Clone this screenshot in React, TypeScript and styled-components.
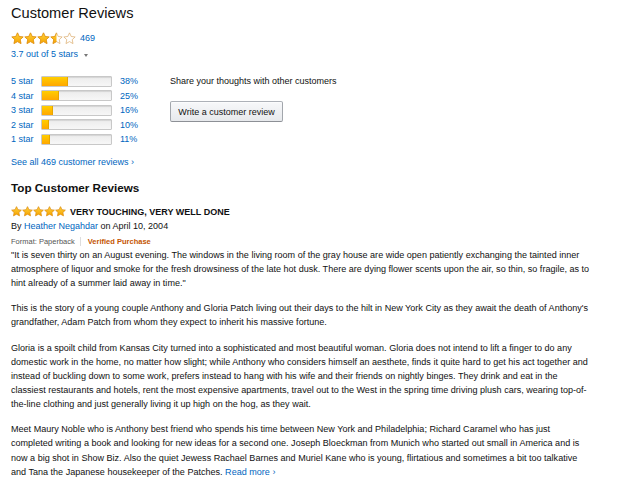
import styled, { createGlobalStyle } from 'styled-components'

const GlobalStyle = createGlobalStyle`
  html, body {
    margin: 0;
    padding: 0;
    background: #fff;
  }
  body {
    font-family: "Liberation Sans", Arial, sans-serif;
    color: #111;
  }
`

const Page = styled.div`
  padding: 2px 4px 0 11px;
  width: 626px;
  box-sizing: border-box;
  height: 478px;
  overflow: hidden;
`

const Heading = styled.h2`
  font-size: 14.6px;
  font-weight: 400;
  line-height: 22px;
  margin: 0 0 7px;
  color: #111;
`

const Link = styled.a`
  color: #0066c0;
  text-decoration: none;
  cursor: pointer;
`

const StarsRow = styled.div`
  display: flex;
  align-items: center;
  gap: 4px;
  height: 14px;
  font-size: 9px;
`

const StarStrip = styled.span<{ $size: number }>`
  display: inline-flex;
  svg {
    width: ${(p) => p.$size}px;
    height: ${(p) => p.$size}px;
    display: block;
  }
`

const Average = styled.div`
  font-size: 9px;
  line-height: 11px;
  margin: 4px 0 14px;
  display: flex;
  align-items: center;
  gap: 6px;
`

const Caret = styled.span`
  display: inline-block;
  width: 0;
  height: 0;
  border-left: 2.5px solid transparent;
  border-right: 2.5px solid transparent;
  border-top: 3px solid #777;
  margin-top: 1px;
`

const Summary = styled.div`
  display: flex;
`

const Histogram = styled.div`
  width: 159px;
  display: flex;
  flex-direction: column;
`

const HistRow = styled.div`
  display: flex;
  align-items: center;
  height: 14.5px;
  font-size: 9px;
`

const HistLabel = styled(Link)`
  width: 30px;
`

const Bar = styled.div`
  width: 71px;
  height: 11px;
  box-sizing: border-box;
  background: linear-gradient(#ececec, #f7f7f7);
  border: 1px solid #c8c8c8;
  border-radius: 1px;
  box-shadow: inset 0 1px 1px rgba(0, 0, 0, 0.1);
  overflow: hidden;
`

const BarFill = styled.div`
  height: 100%;
  background: linear-gradient(#ffce00, #ffa700);
  border-right: 1px solid #e6a500;
  box-sizing: border-box;
`

const Percent = styled(Link)`
  margin-left: 8px;
`

const SeeAll = styled(Link)`
  font-size: 9px;
  line-height: 11px;
  margin: 10px 0 0;
  display: block;
`

const ShareBox = styled.div`
  padding-top: 2px;
  display: flex;
  flex-direction: column;
  align-items: flex-start;
  gap: 14px;
  font-size: 9px;
  line-height: 11px;
  color: #111;
`

const ReviewButton = styled.button`
  font-family: "Liberation Sans", Arial, sans-serif;
  font-size: 9px;
  color: #111;
  width: 113px;
  height: 21px;
  padding: 0;
  border: 1px solid;
  border-color: #adb1b8 #a2a6ac #8d9096;
  border-radius: 2px;
  background: linear-gradient(#f7f8fa, #e7e9ec);
  box-shadow: 0 1px 0 rgba(255, 255, 255, 0.6) inset;
`

const SubHeading = styled.h3`
  font-size: 11.7px;
  font-weight: 700;
  margin: 12px 0 9px;
  line-height: 16px;
`

const ReviewTitleRow = styled.div`
  display: flex;
  align-items: center;
  gap: 4px;
  height: 14px;
`

const ReviewTitle = styled.span`
  font-size: 9px;
  font-weight: 700;
`

const Byline = styled.div`
  font-size: 9px;
  margin-top: 1.5px;
  line-height: 13px;
`

const Meta = styled.div`
  font-size: 7.5px;
  line-height: 11px;
  color: #555;
  margin-top: 3px;
  display: flex;
  align-items: center;
`

const Divider = styled.span`
  width: 1px;
  height: 9px;
  background: #ddd;
  margin: 0 7px 0 5px;
`

const Verified = styled.span`
  color: #c45500;
  font-weight: 700;
`

const Body = styled.div`
  font-size: 9.05px;
  line-height: 14.1px;
  color: #111;
  margin-top: 0.5px;
`

const Paragraph = styled.p`
  margin: 0 0 11.3px;
`

const Line = styled.span`
  display: block;
  white-space: nowrap;
`

const STAR_PATH = 'M10 1.3l2.6 5.6 6.1.7-4.5 4.2 1.2 6-5.4-3-5.4 3 1.2-6L1.3 7.6l6.1-.7z'

const Star = ({ fill }: { fill: 'full' | 'half' | 'empty' }) => (
  <svg viewBox="0 0 20 20">
    <defs>
      <linearGradient id="sg" x1="0" y1="0" x2="0" y2="1">
        <stop offset="0" stopColor="#ffd33d" />
        <stop offset="1" stopColor="#f5a200" />
      </linearGradient>
      <clipPath id="half">
        <rect x="0" y="0" width="10" height="20" />
      </clipPath>
    </defs>
    <path d={STAR_PATH} fill="#fff" stroke="#d9a45e" strokeWidth="1" strokeLinejoin="round" />
    {fill !== 'empty' && (
      <path
        d={STAR_PATH}
        fill="url(#sg)"
        stroke="#e08a00"
        strokeWidth="1"
        strokeLinejoin="round"
        clipPath={fill === 'half' ? 'url(#half)' : undefined}
      />
    )}
  </svg>
)

const Stars = ({ rating, size }: { rating: number; size: number }) => (
  <StarStrip $size={size}>
    {[1, 2, 3, 4, 5].map((i) => (
      <Star key={i} fill={rating >= i ? 'full' : rating >= i - 0.5 ? 'half' : 'empty'} />
    ))}
  </StarStrip>
)

const breakdown = [
  { label: '5 star', pct: 38 },
  { label: '4 star', pct: 25 },
  { label: '3 star', pct: 16 },
  { label: '2 star', pct: 10 },
  { label: '1 star', pct: 11 },
]

// review text, broken where the original page wraps it
const paragraphs = [
  [
    '"It is seven thirty on an August evening. The windows in the living room of the gray house are wide open patiently exchanging the tainted inner',
    'atmosphere of liquor and smoke for the fresh drowsiness of the late hot dusk. There are dying flower scents upon the air, so thin, so fragile, as to',
    'hint already of a summer laid away in time."',
  ],
  [
    "This is the story of a young couple Anthony and Gloria Patch living out their days to the hilt in New York City as they await the death of Anthony's",
    'grandfather, Adam Patch from whom they expect to inherit his massive fortune.',
  ],
  [
    'Gloria is a spoilt child from Kansas City turned into a sophisticated and most beautiful woman. Gloria does not intend to lift a finger to do any',
    'domestic work in the home, no matter how slight; while Anthony who considers himself an aesthete, finds it quite hard to get his act together and',
    'instead of buckling down to some work, prefers instead to hang with his wife and their friends on nightly binges. They drink and eat in the',
    'classiest restaurants and hotels, rent the most expensive apartments, travel out to the West in the spring time driving plush cars, wearing top-of-',
    'the-line clothing and just generally living it up high on the hog, as they wait.',
  ],
  [
    'Meet Maury Noble who is Anthony best friend who spends his time between New York and Philadelphia; Richard Caramel who has just',
    'completed writing a book and looking for new ideas for a second one. Joseph Bloeckman from Munich who started out small in America and is',
    'now a big shot in Show Biz. Also the quiet Jewess Rachael Barnes and Muriel Kane who is young, flirtatious and sometimes a bit too talkative',
    'and Tana the Japanese housekeeper of the Patches.',
  ],
]

export default function App() {
  return (
    <Page>
      <GlobalStyle />
      <Heading>Customer Reviews</Heading>
      <StarsRow>
        <Stars rating={3.5} size={13} />
        <Link>469</Link>
      </StarsRow>
      <Average>
        <Link>3.7 out of 5 stars</Link>
        <Caret />
      </Average>

      <Summary>
        <Histogram>
          {breakdown.map((b) => (
            <HistRow key={b.label}>
              <HistLabel>{b.label}</HistLabel>
              <Bar>
                <BarFill style={{ width: `${b.pct}%` }} />
              </Bar>
              <Percent>{b.pct}%</Percent>
            </HistRow>
          ))}
          <SeeAll>See all 469 customer reviews ›</SeeAll>
        </Histogram>
        <ShareBox>
          <span>Share your thoughts with other customers</span>
          <ReviewButton>Write a customer review</ReviewButton>
        </ShareBox>
      </Summary>

      <SubHeading>Top Customer Reviews</SubHeading>
      <ReviewTitleRow>
        <Stars rating={5} size={11} />
        <ReviewTitle>VERY TOUCHING, VERY WELL DONE</ReviewTitle>
      </ReviewTitleRow>
      <Byline>
        By <Link>Heather Negahdar</Link> on April 10, 2004
      </Byline>
      <Meta>
        Format: Paperback
        <Divider />
        <Verified>Verified Purchase</Verified>
      </Meta>
      <Body>
        {paragraphs.map((lines, pi) => (
          <Paragraph key={pi}>
            {lines.map((line, li) => (
              <Line key={li}>
                {line}
                {pi === paragraphs.length - 1 && li === lines.length - 1 && (
                  <> <Link>Read more ›</Link></>
                )}
              </Line>
            ))}
          </Paragraph>
        ))}
      </Body>
    </Page>
  )
}
